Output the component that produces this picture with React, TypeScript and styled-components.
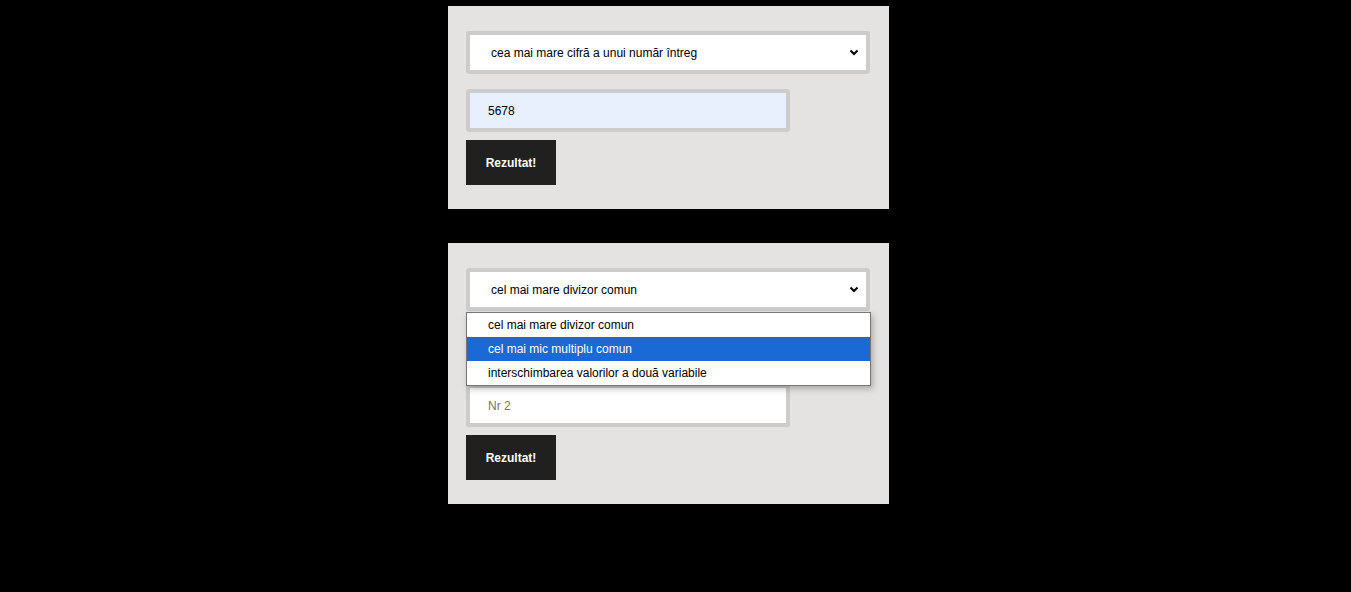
import React from "react";
import styled, { createGlobalStyle } from "styled-components";

const Global = createGlobalStyle`
  html, body { margin: 0; padding: 0; background: #000; }
  body { font-family: "Liberation Sans", Arial, sans-serif; font-size: 12px; color: #000; }
  * { box-sizing: border-box; }
`;

const Page = styled.div`
  display: flex;
  flex-direction: column;
  gap: 34px;
  padding: 6px 0 0 448px;
  min-height: 592px;
`;

const Panel = styled.section`
  width: 441px;
  background: #e4e3e1;
  padding: 25px 19px 24px 18px;
  display: flex;
  flex-direction: column;
  align-items: flex-start;
`;

const SelectWrap = styled.div`
  position: relative;
  width: 404px;
  margin-bottom: 15px;
`;

const SelectBox = styled.div`
  width: 404px;
  height: 43px;
  border: 4px solid #cccccc;
  border-radius: 3px;
  background: #fff;
  display: flex;
  align-items: center;
  justify-content: space-between;
  padding: 0 7px 0 21px;
  font-size: 12px;
  color: #000;
`;

const Input = styled.input<{ $filled?: boolean; $last?: boolean }>`
  width: 324px;
  height: 43px;
  border: 4px solid #cccccc;
  border-radius: 3px;
  background: ${(p) => (p.$filled ? "#e8f0fe" : "#fff")};
  padding: 0 0 0 18px;
  font-family: "Liberation Sans", Arial, sans-serif;
  font-size: 12px;
  color: #000;
  outline: none;
  margin: 0 0 ${(p) => (p.$last ? "8px" : "15px")} 0;
  &::placeholder { color: #757575; }
`;

const Button = styled.button`
  width: 90px;
  height: 45px;
  border: none;
  background: #202020;
  color: #fff;
  font-family: "Liberation Sans", Arial, sans-serif;
  font-weight: bold;
  font-size: 12px;
  padding: 0;
`;

const Dropdown = styled.ul`
  position: absolute;
  left: 0;
  top: 44px;
  width: 405px;
  margin: 0;
  padding: 0;
  list-style: none;
  background: #fff;
  border: 1px solid #767676;
  box-shadow: 2px 3px 6px rgba(0, 0, 0, 0.25);
  z-index: 5;
`;

const Option = styled.li<{ $active?: boolean }>`
  height: 24px;
  display: flex;
  align-items: center;
  padding-left: 21px;
  font-size: 12px;
  background: ${(p) => (p.$active ? "#1a69d4" : "#fff")};
  color: ${(p) => (p.$active ? "#fff" : "#000")};
`;

const Chevron = () => (
  <svg width="10" height="7" viewBox="0 0 10 7">
    <path d="M1.5 1.5 L5 5 L8.5 1.5" fill="none" stroke="#000" strokeWidth="2" />
  </svg>
);

export default function App() {
  return (
    <>
      <Global />
      <Page>
        <Panel>
          <SelectWrap>
            <SelectBox>
              <span>cea mai mare cifră a unui număr întreg</span>
              <Chevron />
            </SelectBox>
          </SelectWrap>
          <Input $filled $last defaultValue="5678" />
          <Button>Rezultat!</Button>
        </Panel>
        <Panel>
          <SelectWrap>
            <SelectBox>
              <span>cel mai mare divizor comun</span>
              <Chevron />
            </SelectBox>
            <Dropdown>
              <Option>cel mai mare divizor comun</Option>
              <Option $active>cel mai mic multiplu comun</Option>
              <Option>interschimbarea valorilor a două variabile</Option>
            </Dropdown>
          </SelectWrap>
          <Input placeholder="Nr 1" />
          <Input $last placeholder="Nr 2" />
          <Button>Rezultat!</Button>
        </Panel>
      </Page>
    </>
  );
}
